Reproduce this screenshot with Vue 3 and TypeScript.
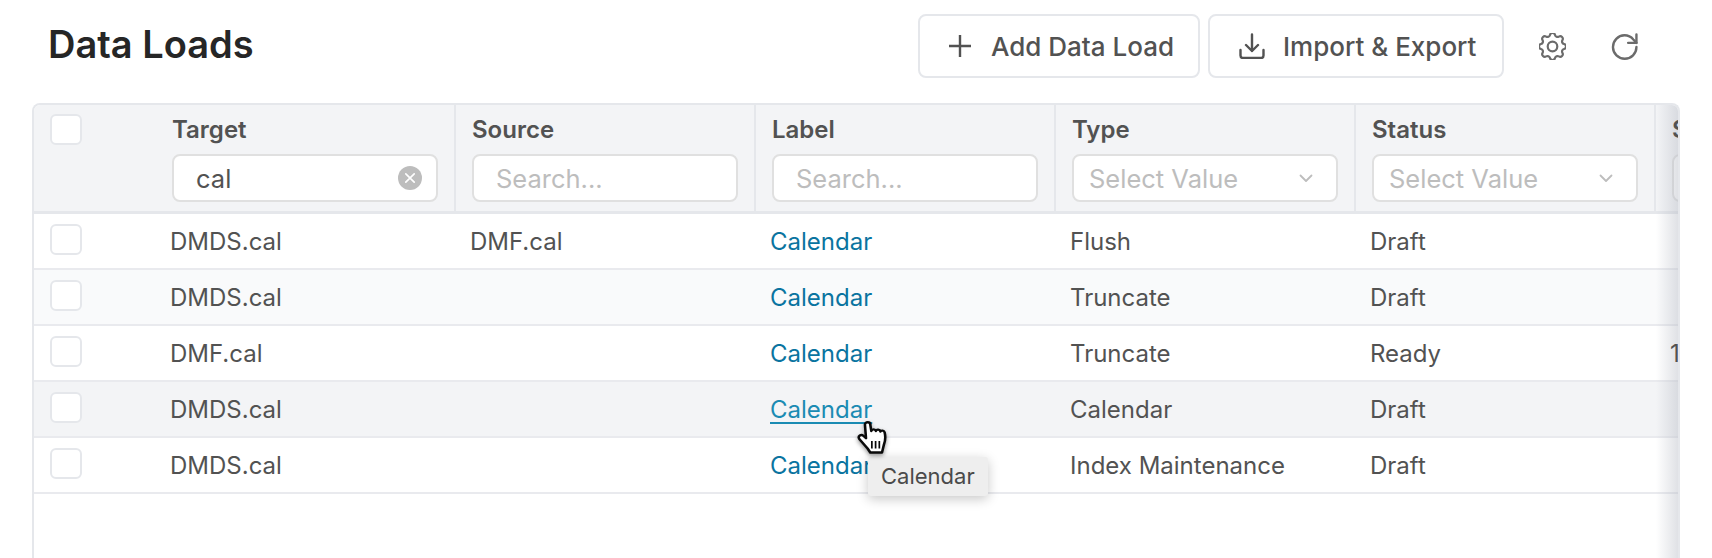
<script setup lang="ts">
type Row = { target: string; source: string; type: string; status: string; next: string };

const rows: Row[] = [
  { target: "DMDS.cal", source: "DMF.cal", type: "Flush", status: "Draft", next: "" },
  { target: "DMDS.cal", source: "", type: "Truncate", status: "Draft", next: "" },
  { target: "DMF.cal", source: "", type: "Truncate", status: "Ready", next: "12:00" },
  { target: "DMDS.cal", source: "", type: "Calendar", status: "Draft", next: "" },
  { target: "DMDS.cal", source: "", type: "Index Maintenance", status: "Draft", next: "" },
];
const hoveredRow = 3;
</script>

<template>
  <div class="page">
    <header class="topbar">
      <h1 class="title">Data Loads</h1>
      <div class="actions">
        <button class="btn">
          <svg class="btn-icon" viewBox="0 0 22 22" fill="none" stroke="currentColor" stroke-width="2.4">
            <path d="M11 0v22M0 11h22" />
          </svg>
          Add Data Load
        </button>
        <button class="btn btn-import">
          <svg class="btn-icon" viewBox="0 0 26 26" fill="none" stroke="currentColor" stroke-width="2.4" stroke-linecap="round" stroke-linejoin="round">
            <path d="M13 1.5V18M7 12l6 6 6-6M1.5 17v5.5A2.5 2.5 0 0 0 4 25h18a2.5 2.5 0 0 0 2.5-2.5V17" />
          </svg>
          Import &amp; Export
        </button>
        <svg class="tool-icon gear" viewBox="3 3 18 18" fill="none" stroke="currentColor" stroke-width="1.45" stroke-linejoin="round">
          <path d="M10.325 4.317c.426-1.756 2.924-1.756 3.35 0a1.724 1.724 0 002.573 1.066c1.543-.94 3.31.826 2.37 2.37a1.724 1.724 0 001.065 2.572c1.756.426 1.756 2.924 0 3.35a1.724 1.724 0 00-1.066 2.573c.94 1.543-.826 3.31-2.37 2.37a1.724 1.724 0 00-2.572 1.065c-.426 1.756-2.924 1.756-3.35 0a1.724 1.724 0 00-2.573-1.066c-1.543.94-3.31-.826-2.37-2.37a1.724 1.724 0 00-1.065-2.572c-1.756-.426-1.756-2.924 0-3.35a1.724 1.724 0 001.066-2.573c-.94-1.543.826-3.31 2.37-2.37.996.608 2.296.07 2.572-1.065z" />
          <circle cx="12" cy="12" r="3.2" />
        </svg>
        <svg class="tool-icon refresh" viewBox="0 0 26 26" fill="none" stroke="currentColor" stroke-width="2.3" stroke-linecap="round" stroke-linejoin="round">
          <path d="M24.5 13.5A11.3 11.3 0 1 1 13 2.2c3.4 0 6.4 1.5 8.5 4l3 3.3" />
          <path d="M24.5 1.5v8h-8" />
        </svg>
      </div>
    </header>

    <section class="table">
      <div class="row head">
        <div class="cell check-cell"><span class="checkbox"></span></div>
        <div class="cell head-cell">
          <span class="label">Target</span>
          <div class="field">
            <span class="value">cal</span>
            <span class="clear">
              <svg viewBox="0 0 10 10" fill="none" stroke="#fff" stroke-width="1.4" stroke-linecap="round"><path d="M1.5 1.5l7 7M8.5 1.5l-7 7" /></svg>
            </span>
          </div>
        </div>
        <div class="cell head-cell">
          <span class="label">Source</span>
          <div class="field"><span class="placeholder">Search...</span></div>
        </div>
        <div class="cell head-cell">
          <span class="label">Label</span>
          <div class="field"><span class="placeholder">Search...</span></div>
        </div>
        <div class="cell head-cell">
          <span class="label">Type</span>
          <div class="field select">
            <span class="placeholder">Select Value</span>
            <svg class="chevron" viewBox="0 0 14 9" fill="none" stroke="currentColor" stroke-width="1.8" stroke-linecap="round" stroke-linejoin="round"><path d="M1.5 1.5L7 7l5.5-5.5" /></svg>
          </div>
        </div>
        <div class="cell head-cell">
          <span class="label">Status</span>
          <div class="field select">
            <span class="placeholder">Select Value</span>
            <svg class="chevron" viewBox="0 0 14 9" fill="none" stroke="currentColor" stroke-width="1.8" stroke-linecap="round" stroke-linejoin="round"><path d="M1.5 1.5L7 7l5.5-5.5" /></svg>
          </div>
        </div>
        <div class="cell head-cell last">
          <span class="label above">Schedule</span>
          <div class="field"></div>
        </div>
      </div>

      <div
        v-for="(row, i) in rows"
        :key="i"
        class="row body-row"
        :class="{ striped: i % 2 === 1, hovered: i === hoveredRow }"
      >
        <div class="cell check-cell"><span class="checkbox"></span></div>
        <div class="cell">{{ row.target }}</div>
        <div class="cell">{{ row.source }}</div>
        <div class="cell"><a class="link">Calendar</a></div>
        <div class="cell">{{ row.type }}</div>
        <div class="cell">{{ row.status }}</div>
        <div class="cell"><span class="above">{{ row.next }}</span></div>
      </div>

      <div class="edge-shadow"></div>
    </section>

    <div class="tooltip">Calendar</div>

    <svg class="cursor" viewBox="0 0 30 34" preserveAspectRatio="none">
      <path
        d="M6.5 3.5c0-3 5-3 5 0l1 6.5c.6-2.2 3.8-2.2 4.3 0 .6-2 3.7-1.8 4.2.5.7-1.5 3.6-1 4 1 1 4.5.5 9-.8 12.5l-1.7 7.5H11.5L9 27.5 1.2 18c-1.7-2.8 1.7-5.3 4-3l2.3 2.2z"
        fill="#fff"
        stroke="#0a0a0a"
        stroke-width="2.4"
        stroke-linejoin="round"
      />
      <path d="M13 20v7.5M16.5 20v7.5M20 20v7.5" stroke="#0a0a0a" stroke-width="1.6" fill="none" />
    </svg>
  </div>
</template>

<style>
html,
body {
  margin: 0;
  height: 100%;
  overflow: hidden;
  background: #fff;
}
</style>

<style scoped>
.page {
  position: relative;
  height: 558px;
  overflow: hidden;
  font-family: Inter, "Liberation Sans", sans-serif;
  font-size: 24px;
  color: #525252;
}

.topbar {
  display: flex;
  align-items: center;
  justify-content: space-between;
  height: 64px;
  padding: 14px 74px 0 48px;
}

.title {
  margin: 0;
  font-size: 38px;
  font-weight: 600;
  color: #262626;
  position: relative;
  top: -2px;
}

.actions {
  display: flex;
  align-items: center;
}

.btn {
  display: flex;
  align-items: center;
  gap: 20px;
  width: 282px;
  height: 64px;
  box-sizing: border-box;
  padding: 0 20px 0 29px;
  margin-right: 8px;
  border: 2px solid #e5e7eb;
  border-radius: 8px;
  background: #fff;
  font: 500 26px Inter, "Liberation Sans", sans-serif;
  color: #525252;
  white-space: nowrap;
}

.btn-import {
  width: 296px;
  gap: 18px;
  margin-right: 35px;
}

.btn-icon {
  width: 22px;
  height: 22px;
  flex: none;
}

.btn-import .btn-icon {
  width: 26px;
  height: 26px;
}

.tool-icon {
  width: 27px;
  height: 27px;
  color: #6b6b6b;
}

.refresh {
  margin-left: 45px;
  width: 27px;
  height: 27px;
}

.table {
  position: relative;
  box-sizing: border-box;
  width: 1648px;
  height: 460px;
  margin: 25px 0 0 32px;
  border: 2px solid #e5e7eb;
  border-bottom: 0;
  border-radius: 8px 8px 0 0;
  overflow: hidden;
}

.row {
  display: grid;
  grid-template-columns: 121px repeat(6, 300px);
  width: 1921px;
}

.head {
  height: 109px;
  background: #f3f4f6;
  border-bottom: 3px solid #e5e7eb;
  box-sizing: border-box;
}

.body-row {
  height: 56px;
  box-sizing: border-box;
  border-bottom: 2px solid #e9eaee;
  background: #fff;
}

.striped {
  background: #f9fafb;
}

.hovered {
  background: #f3f4f6;
}

.cell {
  display: flex;
  align-items: center;
  padding-left: 15px;
  white-space: nowrap;
  overflow: hidden;
}

.check-cell {
  padding-left: 16px;
  align-items: flex-start;
  padding-top: 10px;
}

.head .check-cell {
  padding-top: 9px;
}

.checkbox {
  display: block;
  width: 32px;
  height: 31px;
  box-sizing: border-box;
  border: 2px solid #e5e7eb;
  border-radius: 6px;
  background: #fff;
}

.head-cell {
  flex-direction: column;
  align-items: flex-start;
  padding: 8px 15px 0 17px;
  margin-right: -1px;
  box-sizing: border-box;
  border-right: 2px solid #e5e7eb;
  height: 106px;
}

.head-cell.last {
  border-right: 0;
}

.label {
  font-weight: 600;
  line-height: 34px;
  color: #525252;
}

.above {
  position: relative;
  z-index: 1;
}

.field {
  display: flex;
  align-items: center;
  justify-content: space-between;
  width: 266px;
  height: 48px;
  margin-top: 7px;
  box-sizing: border-box;
  padding: 0 14px 0 22px;
  border: 2px solid #e0e0e0;
  border-radius: 8px;
  background: #fff;
  flex: none;
  font-size: 25.5px;
}

.select {
  padding-left: 15px;
  padding-right: 23px;
}

.value {
  color: #525252;
}

.placeholder {
  color: #bdbdbd;
}

.clear {
  display: flex;
  align-items: center;
  justify-content: center;
  width: 24px;
  height: 24px;
  border-radius: 50%;
  background: #bdbdbd;
}

.clear svg {
  width: 12px;
  height: 12px;
}

.chevron {
  width: 14px;
  height: 9px;
  color: #bdbdbd;
}

.link {
  color: #0a74a0;
}

.hovered .link {
  color: #1a8bb3;
  text-decoration: underline;
  text-underline-offset: 4px;
}

.edge-shadow {
  position: absolute;
  top: 0;
  right: 0;
  bottom: 0;
  width: 22px;
  background: linear-gradient(to right, rgba(180, 184, 194, 0), rgba(180, 184, 194, 0.42));
}

.tooltip {
  position: absolute;
  left: 868px;
  top: 457px;
  padding: 0 13px;
  height: 39px;
  line-height: 39px;
  font-size: 22px;
  background: #eeeeee;
  border-radius: 3px;
  box-shadow: 0 3px 12px rgba(0, 0, 0, 0.22);
  color: #4a4a4a;
}

.cursor {
  position: absolute;
  left: 858px;
  top: 421px;
  width: 32px;
  height: 34px;
  overflow: visible;
  filter: drop-shadow(0 2px 2px rgba(0, 0, 0, 0.4));
}
</style>
